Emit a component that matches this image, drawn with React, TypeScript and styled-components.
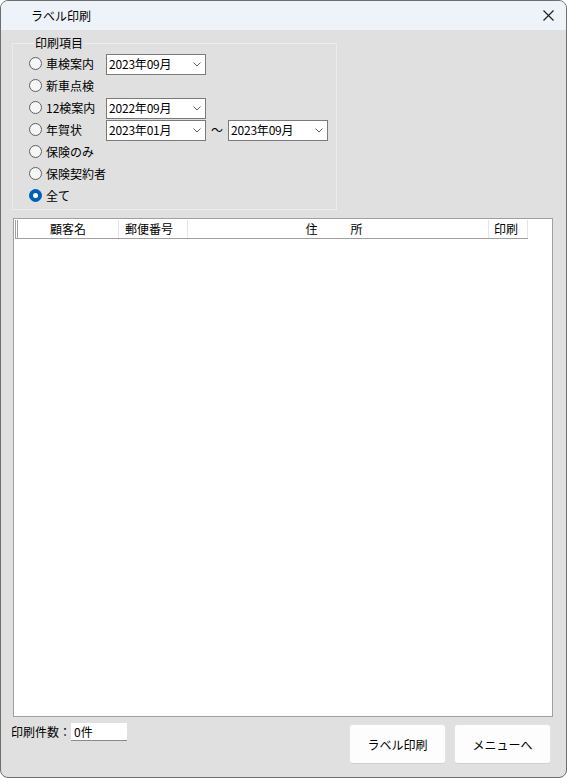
import React from 'react';
import styled, { createGlobalStyle } from 'styled-components';

const Global = createGlobalStyle`
  html, body { margin: 0; padding: 0; background: #ffffff; }
  body {
    font-family: "Noto Sans CJK JP", "Noto Sans", "Liberation Sans", sans-serif;
    font-size: 12px;
    color: #000;
  }
  * { box-sizing: border-box; }
`;

const Window = styled.div`
  width: 567px;
  height: 778px;
  border: 1px solid #6e6e6e;
  border-radius: 8px;
  overflow: hidden;
  background: #e0e0e0;
  display: flex;
  flex-direction: column;
`;

const TitleBar = styled.div`
  height: 29px;
  flex: none;
  background: #eef3f9;
  display: flex;
  align-items: center;
  padding: 0 9px 0 30px;
  font-size: 12px;
  line-height: 14px;
`;

const Title = styled.span`
  flex: 1;
  padding-top: 1px;
`;

const CloseButton = styled.span`
  width: 12px;
  height: 12px;
  display: flex;
  align-items: center;
  justify-content: center;
  margin-right: 3px;
`;

const Content = styled.div`
  flex: 1;
  display: flex;
  flex-direction: column;
`;

const GroupBox = styled.fieldset`
  margin: 6px 0 0 11px;
  width: 325px;
  padding: 3px 0 2px 16px;
  min-width: 0;
  border: 1px solid #ececec;
  border-radius: 0;
`;

const Legend = styled.legend`
  margin-left: 5px;
  padding: 0 1px;
  font-size: 12px;
  line-height: 14px;
`;

const OptionRow = styled.div`
  height: 22px;
  display: flex;
  align-items: center;
`;

const Radio = styled.span<{ $checked?: boolean }>`
  width: 13px;
  height: 13px;
  border-radius: 50%;
  flex: none;
  margin-right: 4px;
  margin-top: -1px;
  display: flex;
  align-items: center;
  justify-content: center;
  border: 1px solid ${(p) => (p.$checked ? '#005fb8' : '#5f5f5f')};
  background: ${(p) => (p.$checked ? '#005fb8' : '#f6f6f6')};
  &::after {
    content: '';
    display: ${(p) => (p.$checked ? 'block' : 'none')};
    width: 5px;
    height: 5px;
    border-radius: 50%;
    background: #ffffff;
  }
`;

const OptionLabel = styled.span`
  width: 60px;
  flex: none;
  line-height: 14px;
  white-space: nowrap;
`;

const Combo = styled.div`
  width: 100px;
  height: 21px;
  background: #ffffff;
  border: 1px solid #7a7a7a;
  display: flex;
  align-items: center;
  padding: 0 4px 0 2px;
  font-family: "Noto Sans CJK JP", "Liberation Sans", sans-serif;
  font-size: 12px;
  line-height: 14px;
`;

const ComboText = styled.span`
  flex: 1;
  letter-spacing: -0.2px;
`;

const Tilde = styled.span`
  width: 12px;
  margin: 0 5px;
  text-align: center;
  line-height: 14px;
`;

const ListBox = styled.div`
  margin: 8px 0 0 12px;
  width: 540px;
  height: 499px;
  background: #ffffff;
  border: 1px solid #a0a0a0;
  padding: 1px 0 0 1px;
`;

const HeaderRow = styled.div`
  display: flex;
  width: 513px;
  height: 19px;
  border-bottom: 1px solid #a0a0a0;
`;

const HeaderCell = styled.div<{ $w: number; $align?: 'left' | 'center'; $pad?: number }>`
  width: ${(p) => p.$w}px;
  flex: none;
  height: 18px;
  border-right: 1px solid #e5e5e5;
  display: flex;
  align-items: center;
  justify-content: ${(p) => (p.$align === 'left' ? 'flex-start' : 'center')};
  padding-left: ${(p) => p.$pad ?? 0}px;
  line-height: 14px;
  white-space: nowrap;
`;

const EdgeCell = styled.div`
  width: 3px;
  flex: none;
  height: 18px;
  border-left: 1px solid #a0a0a0;
  border-right: 1px solid #a0a0a0;
`;

const Spread = styled.span`
  display: flex;
  gap: 33px;
  margin-left: -8px;
`;

const Footer = styled.div`
  display: flex;
  align-items: flex-start;
  padding: 6px 15px 0 10px;
`;

const CountLabel = styled.span`
  line-height: 18px;
`;

const CountBox = styled.div`
  width: 56px;
  height: 18px;
  background: #ffffff;
  border-bottom: 1px solid #8a8a8a;
  padding-left: 3px;
  line-height: 18px;
`;

const Buttons = styled.div`
  margin-left: auto;
  margin-top: 1px;
  display: flex;
  gap: 8px;
`;

const Button = styled.button`
  width: 97px;
  height: 40px;
  background: #fdfdfd;
  border: 1px solid #e3e3e3;
  border-bottom-color: #d0d0d0;
  border-radius: 4px;
  font-family: "Noto Sans CJK JP", "Noto Sans", sans-serif;
  font-size: 12px;
  color: #000;
  padding: 0;
`;

const Chevron = () => (
  <svg width="8" height="5" viewBox="0 0 8 5" fill="none">
    <path d="M0.5 0.5 L4 4 L7.5 0.5" stroke="#606060" strokeWidth="1" />
  </svg>
);

const CloseIcon = () => (
  <svg width="11" height="11" viewBox="0 0 11 11" fill="none">
    <path d="M0.5 0.5 L10.5 10.5 M10.5 0.5 L0.5 10.5" stroke="#1a1a1a" strokeWidth="1.1" />
  </svg>
);

const DateCombo = ({ value }: { value: string }) => (
  <Combo>
    <ComboText>{value}</ComboText>
    <Chevron />
  </Combo>
);

type Option = { label: string; checked?: boolean; combos?: string[] };

const options: Option[] = [
  { label: '車検案内', combos: ['2023年09月'] },
  { label: '新車点検' },
  { label: '12検案内', combos: ['2022年09月'] },
  { label: '年賀状', combos: ['2023年01月', '2023年09月'] },
  { label: '保険のみ' },
  { label: '保険契約者' },
  { label: '全て', checked: true },
];

export default function App() {
  return (
    <>
      <Global />
      <Window>
        <TitleBar>
          <Title>ラベル印刷</Title>
          <CloseButton>
            <CloseIcon />
          </CloseButton>
        </TitleBar>
        <Content>
          <GroupBox>
            <Legend>印刷項目</Legend>
            {options.map((o) => (
              <OptionRow key={o.label}>
                <Radio $checked={o.checked} />
                <OptionLabel>{o.label}</OptionLabel>
                {o.combos && <DateCombo value={o.combos[0]} />}
                {o.combos && o.combos[1] && (
                  <>
                    <Tilde>～</Tilde>
                    <DateCombo value={o.combos[1]} />
                  </>
                )}
              </OptionRow>
            ))}
          </GroupBox>
          <ListBox>
            <HeaderRow>
              <EdgeCell />
              <HeaderCell $w={101}>顧客名</HeaderCell>
              <HeaderCell $w={69} $align="left" $pad={6}>郵便番号</HeaderCell>
              <HeaderCell $w={301}>
                <Spread>
                  <span>住</span>
                  <span>所</span>
                </Spread>
              </HeaderCell>
              <HeaderCell $w={39} $align="left" $pad={5}>印刷</HeaderCell>
            </HeaderRow>
          </ListBox>
          <Footer>
            <CountLabel>印刷件数：</CountLabel>
            <CountBox>0件</CountBox>
            <Buttons>
              <Button>ラベル印刷</Button>
              <Button>メニューへ</Button>
            </Buttons>
          </Footer>
        </Content>
      </Window>
    </>
  );
}
